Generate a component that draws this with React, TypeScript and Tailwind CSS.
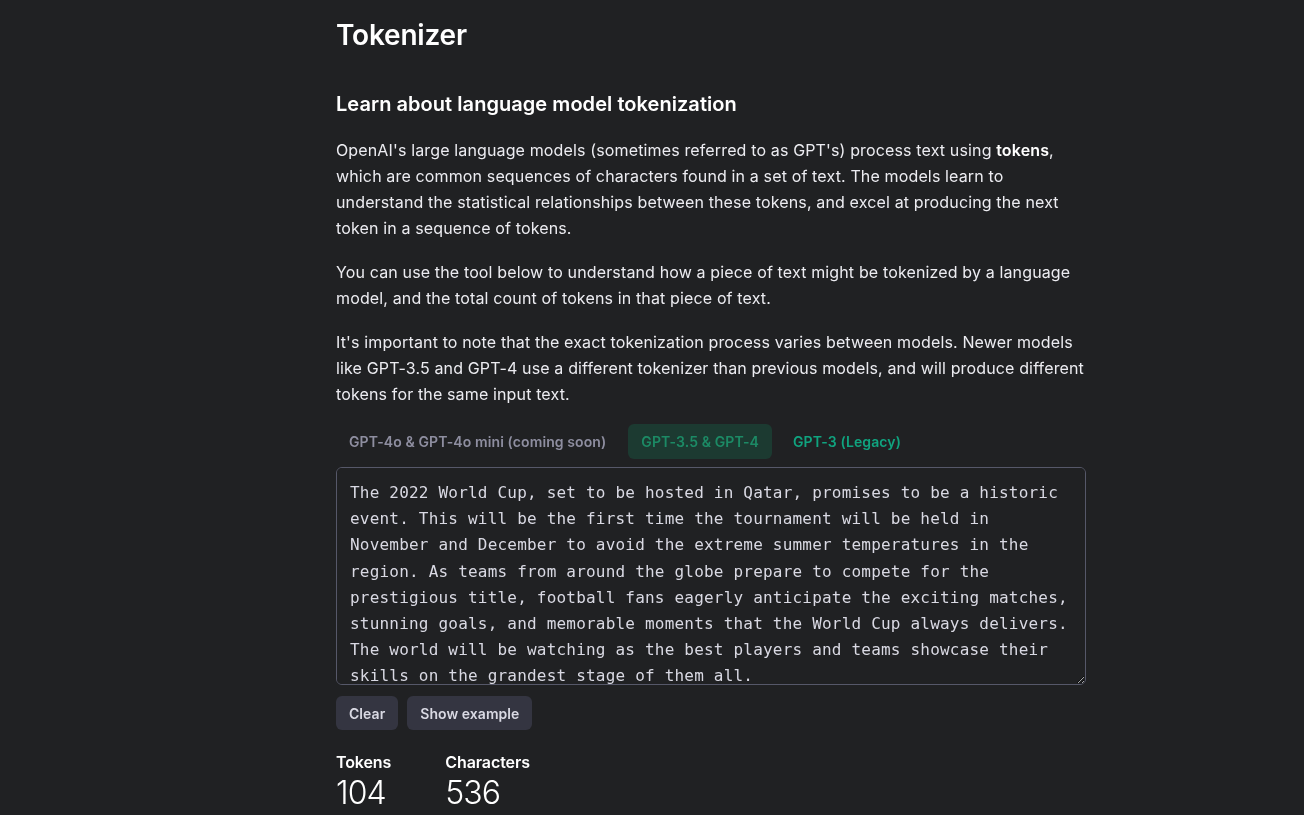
import { useState } from "react";

const sample =
  "The 2022 World Cup, set to be hosted in Qatar, promises to be a historic event. This will be the first time the tournament will be held in November and December to avoid the extreme summer temperatures in the region. As teams from around the globe prepare to compete for the prestigious title, football fans eagerly anticipate the exciting matches, stunning goals, and memorable moments that the World Cup always delivers. The world will be watching as the best players and teams showcase their skills on the grandest stage of them all.";

function App() {
  const [text, setText] = useState(sample);
  const [tab, setTab] = useState("gpt35");

  return (
    <div className="min-h-screen w-full bg-[#202123] text-[#ececf1] font-['Inter','Noto_Sans',sans-serif]">
      <div className="ml-[336px] w-[750px] pt-[16px] pb-10">
        <h1 className="text-[28px] font-semibold leading-[38px] tracking-[-0.2px] text-white">Tokenizer</h1>

        <h2 className="mt-[36px] text-[20px] font-semibold leading-[28px] tracking-[0.05px] text-white">
          Learn about language model tokenization
        </h2>

        {/* Intro */}
        <div className="mt-[19px] space-y-[18px] text-[16px] leading-[26px] tracking-[0.14px] text-[#ececf1]">
          <p>
            OpenAI's large language models (sometimes referred to as GPT's) process text using{" "}
            <b className="font-semibold text-white">tokens</b>, which are common sequences of characters found in a set
            of text. The models learn to understand the statistical relationships between these tokens, and excel at
            producing the next token in a sequence of tokens.
          </p>
          <p>
            You can use the tool below to understand how a piece of text might be tokenized by a language model, and the
            total count of tokens in that piece of text.
          </p>
          <p>
            It's important to note that the exact tokenization process varies between models. Newer models like GPT-3.5
            and GPT-4 use a different tokenizer than previous models, and will produce different tokens for the same
            input text.
          </p>
        </div>

        {/* Model tabs */}
        <div className="mt-[17px] flex items-center text-[14px] font-semibold tracking-[0.1px]">
          <button className="h-[35px] rounded-md px-[13px] text-[#8e8ea0] cursor-default">
            GPT-4o &amp; GPT-4o mini (coming soon)
          </button>
          <button
            onClick={() => setTab("gpt35")}
            className={`ml-[9px] h-[35px] rounded-md px-[13px] ${
              tab === "gpt35" ? "bg-[#1c3a31] text-[#1c8a65]" : "text-[#10a37f]"
            }`}
          >
            GPT-3.5 &amp; GPT-4
          </button>
          <button
            onClick={() => setTab("gpt3")}
            className={`ml-[8px] h-[35px] rounded-md px-[13px] ${
              tab === "gpt3" ? "bg-[#1c3a31] text-[#1c8a65]" : "text-[#10a37f]"
            }`}
          >
            GPT-3 (Legacy)
          </button>
        </div>

        <textarea
          value={text}
          onChange={(e) => setText(e.target.value)}
          spellCheck={false}
          className="mt-[8px] block h-[218px] w-full resize-y rounded-md border border-[#565869] bg-[#202123] px-[13px] py-[12px] font-['DejaVu_Sans_Mono',monospace] text-[16px] leading-[26.2px] tracking-[0.2px] text-[#d9d9e3] outline-none"
        />

        <div className="mt-[11px] flex gap-[9px] text-[14px] font-semibold tracking-[0.05px]">
          <button onClick={() => setText("")} className="h-[34px] rounded-md bg-[#343541] px-[13px] text-[#d9d9e3]">
            Clear
          </button>
          <button onClick={() => setText(sample)} className="h-[34px] rounded-md bg-[#343541] px-[13px] text-[#d9d9e3]">
            Show example
          </button>
        </div>

        {/* Stats */}
        <div className="mt-[21px] flex gap-[54px]">
          <div>
            <div className="text-[16px] font-semibold leading-[22px] tracking-[-0.1px] text-white">Tokens</div>
            <div className="mt-[2px] text-[32px] font-light leading-[36px] tracking-[-0.9px] text-white">104</div>
          </div>
          <div>
            <div className="text-[16px] font-semibold leading-[22px] tracking-[-0.1px] text-white">Characters</div>
            <div className="mt-[2px] text-[32px] font-light leading-[36px] tracking-[-0.9px] text-white">
              {text.length}
            </div>
          </div>
        </div>
      </div>
    </div>
  );
}

export default App;
